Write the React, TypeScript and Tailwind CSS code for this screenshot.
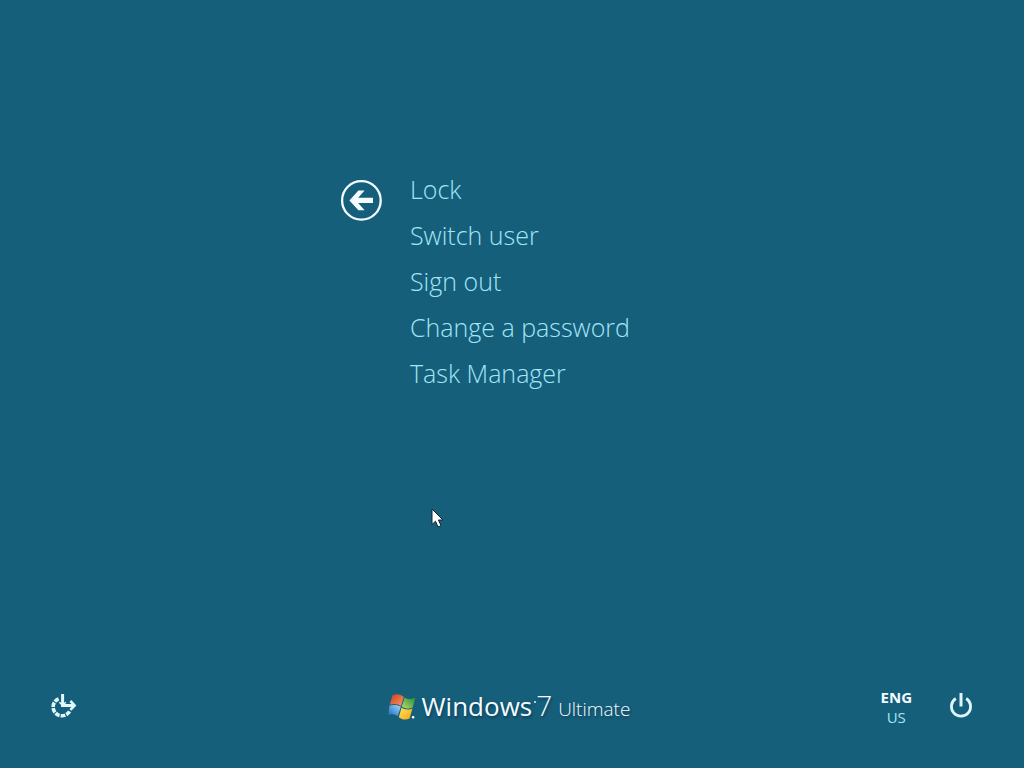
const menuItems = ["Lock", "Switch user", "Sign out", "Change a password", "Task Manager"];

function BackIcon() {
  return (
    <svg className="block" width="42" height="42" viewBox="0 0 42 42" fill="none" aria-hidden="true">
      <circle cx="21.4" cy="21.4" r="19.3" stroke="#f4fcff" strokeWidth="2.3" />
      <path d="M9.4 21.4 18.4 11.6H24.6L18.2 18.8H33V24H18.2L24.6 31.2H18.4Z" fill="#f4fcff" />
    </svg>
  );
}

function EaseOfAccessIcon() {
  return (
    <svg className="block" width="28" height="28" viewBox="0 0 28 28" fill="none" stroke="#def8fd" aria-hidden="true">
      <path d="M8.6 5.8A8.8 8.8 0 1 0 20 17.4" strokeWidth="3.6" strokeDasharray="4.6 1.1" />
      <path d="M12.6 1V12.4H24" strokeWidth="3" />
      <path d="M9.4 9.2 12.6 12.4 15.8 9.2" strokeWidth="1.6" />
      <path d="M20.4 8 24.6 12.4 20.4 16.8" strokeWidth="2.6" />
    </svg>
  );
}

function PowerIcon() {
  return (
    <svg className="block" width="26" height="28" viewBox="0 0 26 28" fill="none" stroke="#dcf4fa" strokeWidth="2.8" aria-hidden="true">
      <path d="M7.8 5.5A9.6 9.6 0 1 0 18.2 5.5" />
      <path d="M13 0V13.5" strokeWidth="3" />
    </svg>
  );
}

function WindowsFlag() {
  return (
    <svg className="block" width="30" height="30" viewBox="0 0 30 30" aria-hidden="true">
      <defs>
        <linearGradient id="flag-red" x1="0" y1="0" x2="1" y2="1">
          <stop offset="0" stopColor="#d43a1c" />
          <stop offset="1" stopColor="#f39a68" />
        </linearGradient>
        <linearGradient id="flag-green" x1="1" y1="0" x2="0" y2="1">
          <stop offset="0" stopColor="#268b35" />
          <stop offset="1" stopColor="#b9dc6c" />
        </linearGradient>
        <linearGradient id="flag-blue" x1="0" y1="1" x2="1" y2="0">
          <stop offset="0" stopColor="#1768c8" />
          <stop offset="1" stopColor="#a9d8f2" />
        </linearGradient>
        <linearGradient id="flag-yellow" x1="1" y1="1" x2="0" y2="0">
          <stop offset="0" stopColor="#f3a411" />
          <stop offset="1" stopColor="#ffe560" />
        </linearGradient>
      </defs>
      <path d="M4.6 3.2C8 1.6 12 2 15.8 4.8L13 14C9.8 11.8 6 11.4 1.8 12.8Z" fill="url(#flag-red)" />
      <path d="M16.6 5.4C20 7.6 23.4 7.6 27.4 5.6L24.6 15.6C21.2 17.4 17.2 17 13.8 14.6Z" fill="url(#flag-green)" />
      <path d="M1.4 13.8C5.4 12.4 9.4 12.6 12.8 14.8L9.8 24C6.8 22 3.4 21.8 0.4 22.8Z" fill="url(#flag-blue)" />
      <path d="M13.6 15.6C16.8 18 20.6 18.2 24.4 16.4L21.6 26.4C18 28.2 14.2 27.8 10.8 25.2Z" fill="url(#flag-yellow)" />
      <rect x="23.8" y="24" width="2.6" height="2.6" rx="1" fill="#f4fcff" />
    </svg>
  );
}

function MousePointer() {
  return (
    <svg className="pointer-events-none absolute top-[508px] left-[431px]" width="14" height="21" viewBox="0 0 14 21" aria-hidden="true">
      <path d="M1 1V16.5L4.5 13.2 7 19 10 17.7 7.5 12H12Z" fill="#ffffff" stroke="#0b2437" />
    </svg>
  );
}

export default function App() {
  return (
    <div className="relative flex min-h-screen flex-col justify-between overflow-hidden bg-[#165f7b] font-['Open_Sans','Noto_Sans',sans-serif] text-[#a2e6f8]">
      <main className="flex items-start gap-7 pt-[166px] pl-[33.2%]">
        <button type="button" aria-label="Back" className="mt-[13px] rounded-full">
          <BackIcon />
        </button>
        <ul>
          {menuItems.map((item) => (
            <li key={item}>
              <button type="button" className="block h-[46px] text-[25px] leading-[46px] font-light">
                {item}
              </button>
            </li>
          ))}
        </ul>
      </main>

      <footer className="grid grid-cols-[1fr_auto_1fr] items-center px-[50px] pb-[38px]">
        <button type="button" aria-label="Ease of access" className="justify-self-start">
          <EaseOfAccessIcon />
        </button>

        <div className="flex items-center gap-1 pr-1.5 text-[#f4fcff]">
          <WindowsFlag />
          <div className="flex items-baseline leading-[42px] [text-shadow:1px_2px_3px_#0b3d57]">
            <span className="text-[26px] font-medium">Windows</span>
            <span className="h-3 w-1 self-center pl-0.5">
              <span className="block size-0.5 rounded-full bg-[#d6f2fa]" />
            </span>
            <span className="text-[28px] font-light">7</span>
            <span className="ml-1.5 text-[19px] font-light">Ultimate</span>
          </div>
        </div>

        <div className="flex items-center gap-9 justify-self-end">
          <button type="button" className="text-center text-[15px] leading-5">
            <span className="block font-bold text-[#f4fcff]">ENG</span>
            <span className="block">US</span>
          </button>
          <button type="button" aria-label="Power">
            <PowerIcon />
          </button>
        </div>
      </footer>

      <MousePointer />
    </div>
  );
}
